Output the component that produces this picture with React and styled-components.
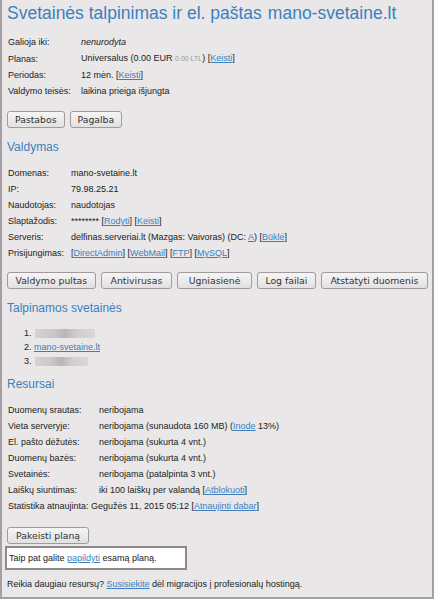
import React from 'react';
import styled, { createGlobalStyle } from 'styled-components';

const GlobalStyle = createGlobalStyle`
  html, body {
    margin: 0;
    padding: 0;
    background: #e9e7e8;
  }
  body {
    font-family: "Liberation Sans", Arial, sans-serif;
    color: #222;
  }
`;

const Page = styled.div`
  box-sizing: border-box;
  width: 434px;
  height: 599px;
  border: 2px solid #a59ea2;
  border-top: none;
  padding: 0 0 0 5px;
  background: #e9e7e8;
  font-size: 9px;
  overflow: hidden;
`;

const Title = styled.h1`
  margin: 2px 0 0;
  font-size: 17.5px;
  line-height: 22px;
  font-weight: normal;
  color: #3b7fc0;
  white-space: nowrap;
`;

const Domain = styled.span`
  margin-left: 6px;
`;

const Heading = styled.h2`
  margin: ${(p) => p.$top}px 0 0;
  font-size: 12px;
  line-height: 16px;
  font-weight: normal;
  color: #3b7fc0;
`;

const InfoTable = styled.table`
  border-collapse: collapse;
  margin-top: ${(p) => p.$top}px;
  td {
    padding: 0 0 0 1px;
    height: 16px;
    line-height: 16px;
    white-space: nowrap;
    vertical-align: middle;
  }
  td:first-child {
    width: ${(p) => p.$label}px;
  }
`;

const Link = styled.a`
  color: #3b7fc0;
  text-decoration: underline;
`;

const Muted = styled.span`
  color: #9a9a9a;
  font-size: 7px;
`;

const ButtonRow = styled.div`
  display: flex;
  gap: 5px;
  margin-top: ${(p) => p.$top}px;
`;

const Button = styled.button`
  box-sizing: border-box;
  flex-shrink: 0;
  height: 17px;
  padding: 0 ${(p) => p.$pad || 7}px;
  border: 1px solid #a19a9d;
  border-radius: 3px;
  background: linear-gradient(#f6f5f5, #e2e0e0);
  font-family: "DejaVu Sans", sans-serif;
  font-size: 9.3px;
  line-height: 15px;
  color: #333;
  white-space: nowrap;
`;

const List = styled.ol`
  margin: 10px 0 0;
  padding-left: 27px;
  li {
    line-height: 14px;
    height: 14px;
  }
`;

const Blur = styled.span`
  display: inline-block;
  vertical-align: middle;
  width: ${(p) => p.$w}px;
  height: 9px;
  margin-left: 1px;
  background: linear-gradient(90deg, #d4d2d3 0%, #c9c7c8 30%, #b8b6b7 50%, #cfcdce 70%, #dad8d9 100%);
  filter: blur(0.6px);
`;

const Stat = styled.div`
  line-height: 16px;
  margin-left: 1px;
`;

const Notice = styled.div`
  box-sizing: border-box;
  width: 182px;
  height: 24px;
  margin: 2px 0 0 -2px;
  padding: 0 0 0 2px;
  background: #fff;
  border: 2px solid #8f878b;
  line-height: 20px;
`;

const Footer = styled.div`
  margin-top: 6px;
  line-height: 16px;
`;

export default function App() {
  return (
    <>
      <GlobalStyle />
      <Page>
        <Title>
          Svetainės talpinimas ir el. paštas<Domain>mano-svetaine.lt</Domain>
        </Title>

        <InfoTable $top={10} $label={72}>
          <tbody>
            <tr><td>Galioja iki:</td><td><i>nenurodyta</i></td></tr>
            <tr><td>Planas:</td><td>Universalus (0.00 EUR <Muted>0.00 LTL</Muted>) [<Link>Keisti</Link>]</td></tr>
            <tr><td>Periodas:</td><td>12 mėn. [<Link>Keisti</Link>]</td></tr>
            <tr><td>Valdymo teisės:</td><td>laikina prieiga išjungta</td></tr>
          </tbody>
        </InfoTable>

        <ButtonRow $top={12}>
          <Button>Pastabos</Button>
          <Button>Pagalba</Button>
        </ButtonRow>

        <Heading $top={11}>Valdymas</Heading>
        <InfoTable $top={10} $label={62}>
          <tbody>
            <tr><td>Domenas:</td><td>mano-svetaine.lt</td></tr>
            <tr><td>IP:</td><td>79.98.25.21</td></tr>
            <tr><td>Naudotojas:</td><td>naudotojas</td></tr>
            <tr><td>Slaptažodis:</td><td>******** [<Link>Rodyti</Link>] [<Link>Keisti</Link>]</td></tr>
            <tr><td>Serveris:</td><td>delfinas.serveriai.lt (Mazgas: Vaivoras) (DC: <Link>A</Link>) [<Link>Būklė</Link>]</td></tr>
            <tr><td>Prisijungimas:</td><td>[<Link>DirectAdmin</Link>] [<Link>WebMail</Link>] [<Link>FTP</Link>] [<Link>MySQL</Link>]</td></tr>
          </tbody>
        </InfoTable>

        <ButtonRow $top={11}>
          <Button $pad={7.5}>Valdymo pultas</Button>
          <Button $pad={9}>Antivirusas</Button>
          <Button $pad={10.5}>Ugniasienė</Button>
          <Button $pad={7.5}>Log failai</Button>
          <Button $pad={8.5}>Atstatyti duomenis</Button>
        </ButtonRow>

        <Heading $top={11}>Talpinamos svetainės</Heading>
        <List>
          <li><Blur $w={60} /></li>
          <li><Link>mano-svetaine.lt</Link></li>
          <li><Blur $w={53} /></li>
        </List>

        <Heading $top={8}>Resursai</Heading>
        <InfoTable $top={10} $label={90}>
          <tbody>
            <tr><td>Duomenų srautas:</td><td>neribojama</td></tr>
            <tr><td>Vieta serveryje:</td><td>neribojama (sunaudota 160 MB) (<Link>Inode</Link> 13%)</td></tr>
            <tr><td>El. pašto dėžutės:</td><td>neribojama (sukurta 4 vnt.)</td></tr>
            <tr><td>Duomenų bazės:</td><td>neribojama (sukurta 4 vnt.)</td></tr>
            <tr><td>Svetainės:</td><td>neribojama (patalpinta 3 vnt.)</td></tr>
            <tr><td>Laiškų siuntimas:</td><td>iki 100 laiškų per valandą [<Link>Atblokuoti</Link>]</td></tr>
          </tbody>
        </InfoTable>
        <Stat>Statistika atnaujinta: Gegužės 11, 2015 05:12 [<Link>Atnaujinti dabar</Link>]</Stat>

        <ButtonRow $top={13}>
          <Button $pad={8}>Pakeisti planą</Button>
        </ButtonRow>

        <Notice>Taip pat galite <Link>papildyti</Link> esamą planą.</Notice>

        <Footer>Reikia daugiau resursų? <Link>Susisiekite</Link> dėl migracijos į profesionalų hostingą.</Footer>
      </Page>
    </>
  );
}
